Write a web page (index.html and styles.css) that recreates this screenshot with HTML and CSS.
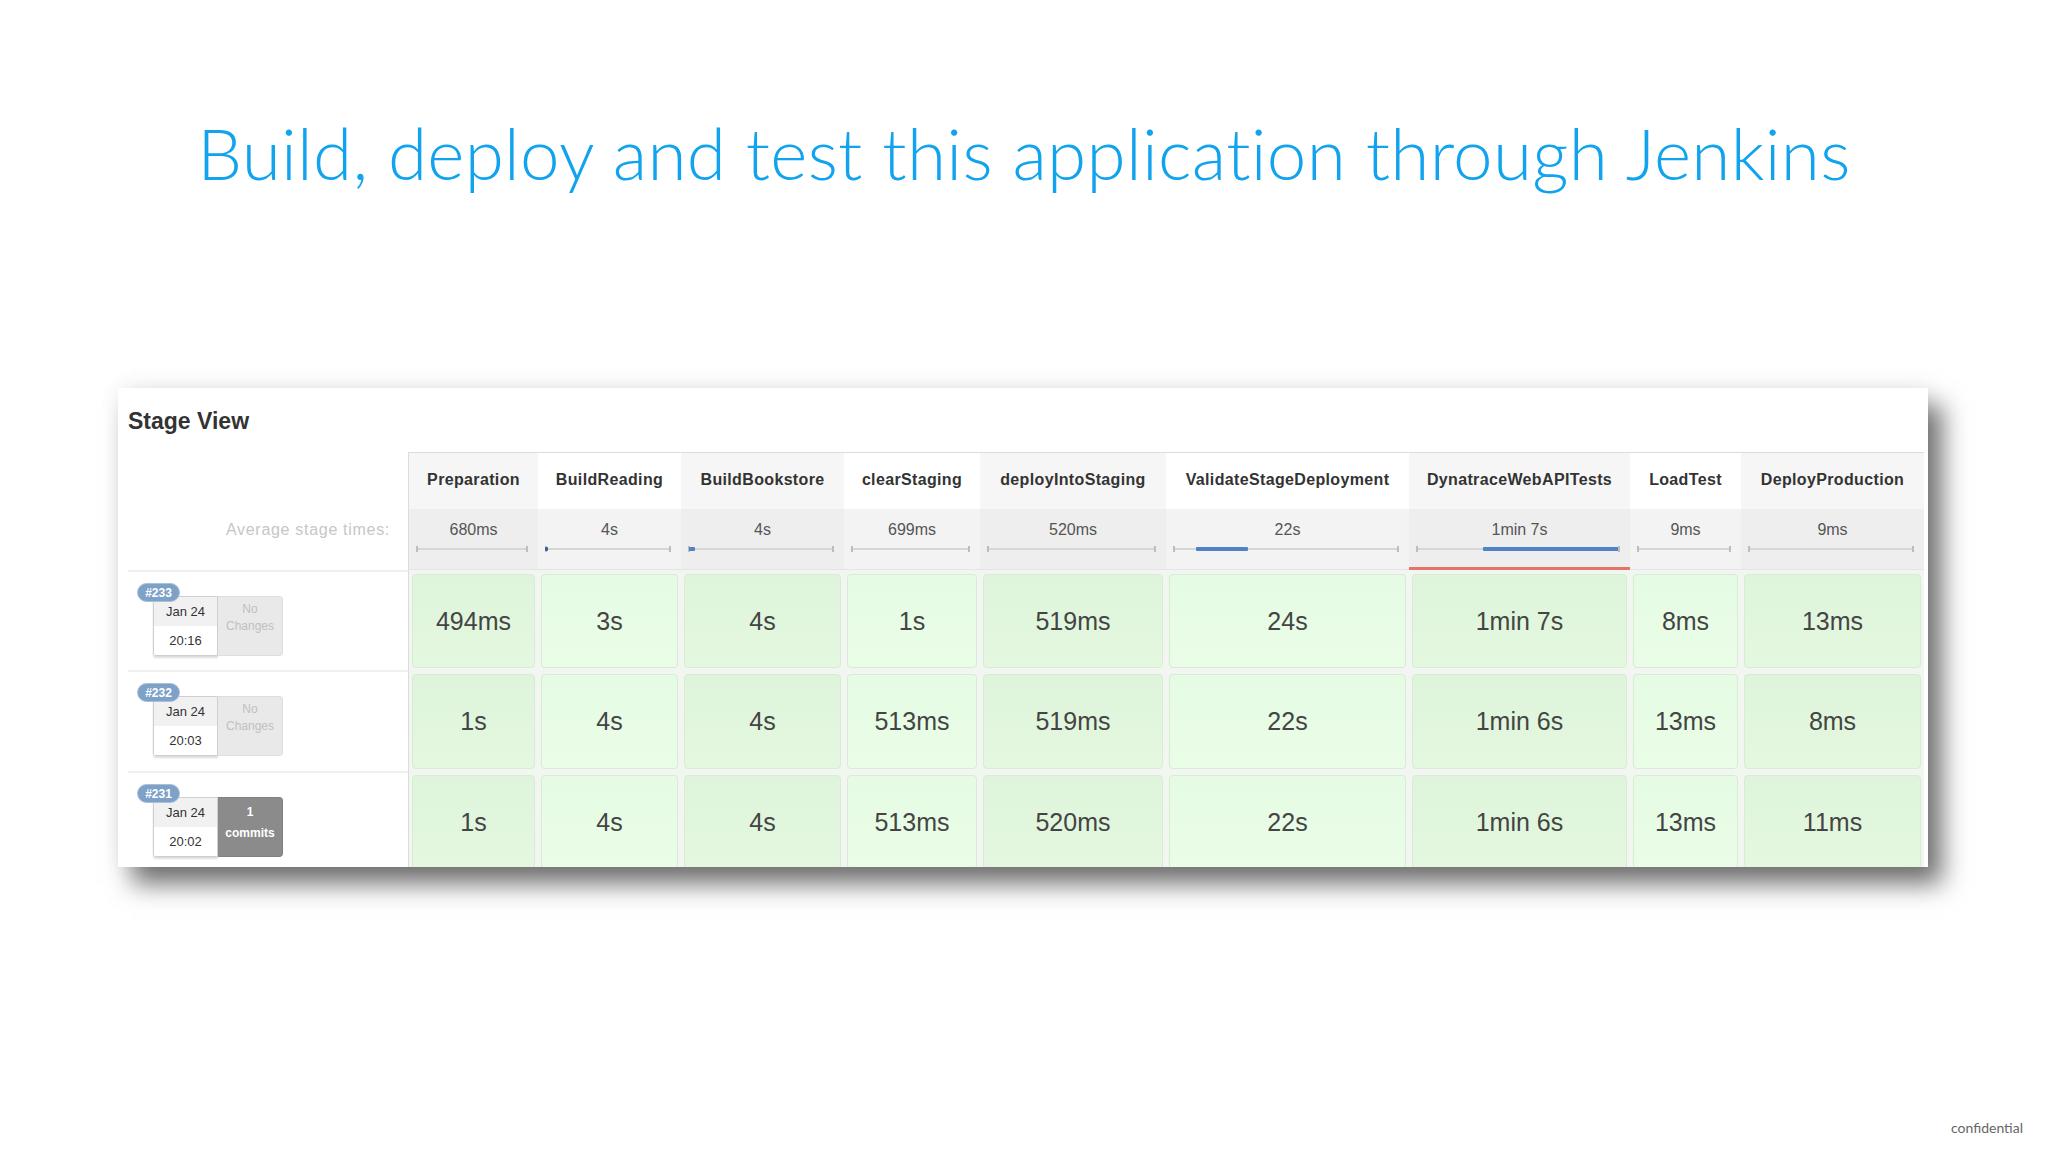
FILE: index.html
```html
<!DOCTYPE html>
<html lang="en">
<head>
<meta charset="utf-8">
<title>Build, deploy and test this application through Jenkins</title>
<link rel="stylesheet" href="styles.css">
</head>
<body>
<div class="slide">
  <h1 class="title">Build, deploy and test this application through Jenkins</h1>

  <div class="panel">
    <h2 class="sv-title">Stage View</h2>
    <div class="sv-grid">
      <!-- header row -->
      <div class="left-head"></div>
      <div class="st-head alt first">Preparation</div>
      <div class="st-head">BuildReading</div>
      <div class="st-head alt">BuildBookstore</div>
      <div class="st-head">clearStaging</div>
      <div class="st-head alt">deployIntoStaging</div>
      <div class="st-head">ValidateStageDeployment</div>
      <div class="st-head alt">DynatraceWebAPITests</div>
      <div class="st-head">LoadTest</div>
      <div class="st-head alt">DeployProduction</div>

      <!-- average row -->
      <div class="avg-label">Average stage times:</div>
      <div class="avg alt first"><span class="avg-time">680ms</span><div class="bar"></div></div>
      <div class="avg"><span class="avg-time">4s</span><div class="bar"><span class="fill dot" style="left:0;width:2%"></span></div></div>
      <div class="avg alt"><span class="avg-time">4s</span><div class="bar"><span class="fill" style="left:1%;width:4%"></span></div></div>
      <div class="avg"><span class="avg-time">699ms</span><div class="bar"></div></div>
      <div class="avg alt"><span class="avg-time">520ms</span><div class="bar"></div></div>
      <div class="avg"><span class="avg-time">22s</span><div class="bar"><span class="fill" style="left:10%;width:23%"></span></div></div>
      <div class="avg alt slow"><span class="avg-time">1min 7s</span><div class="bar"><span class="fill" style="left:33%;width:67%"></span></div></div>
      <div class="avg"><span class="avg-time">9ms</span><div class="bar"></div></div>
      <div class="avg alt"><span class="avg-time">9ms</span><div class="bar"></div></div>

      <!-- build #233 -->
      <div class="build">
        <span class="badge">#233</span>
        <div class="card">
          <div class="date"><span class="day">Jan 24</span><span class="time">20:16</span></div>
          <div class="changes"><span>No</span><span>Changes</span></div>
        </div>
      </div>
      <div class="cell alt first"><div class="box">494ms</div></div>
      <div class="cell"><div class="box">3s</div></div>
      <div class="cell alt"><div class="box">4s</div></div>
      <div class="cell"><div class="box">1s</div></div>
      <div class="cell alt"><div class="box">519ms</div></div>
      <div class="cell"><div class="box">24s</div></div>
      <div class="cell alt"><div class="box">1min 7s</div></div>
      <div class="cell"><div class="box">8ms</div></div>
      <div class="cell alt"><div class="box">13ms</div></div>

      <!-- build #232 -->
      <div class="build">
        <span class="badge">#232</span>
        <div class="card">
          <div class="date"><span class="day">Jan 24</span><span class="time">20:03</span></div>
          <div class="changes"><span>No</span><span>Changes</span></div>
        </div>
      </div>
      <div class="cell alt first"><div class="box">1s</div></div>
      <div class="cell"><div class="box">4s</div></div>
      <div class="cell alt"><div class="box">4s</div></div>
      <div class="cell"><div class="box">513ms</div></div>
      <div class="cell alt"><div class="box">519ms</div></div>
      <div class="cell"><div class="box">22s</div></div>
      <div class="cell alt"><div class="box">1min 6s</div></div>
      <div class="cell"><div class="box">13ms</div></div>
      <div class="cell alt"><div class="box">8ms</div></div>

      <!-- build #231 -->
      <div class="build">
        <span class="badge">#231</span>
        <div class="card">
          <div class="date"><span class="day">Jan 24</span><span class="time">20:02</span></div>
          <div class="changes commits"><span class="num">1</span><span>commits</span></div>
        </div>
      </div>
      <div class="cell alt first"><div class="box">1s</div></div>
      <div class="cell"><div class="box">4s</div></div>
      <div class="cell alt"><div class="box">4s</div></div>
      <div class="cell"><div class="box">513ms</div></div>
      <div class="cell alt"><div class="box">520ms</div></div>
      <div class="cell"><div class="box">22s</div></div>
      <div class="cell alt"><div class="box">1min 6s</div></div>
      <div class="cell"><div class="box">13ms</div></div>
      <div class="cell alt"><div class="box">11ms</div></div>
    </div>
  </div>

  <div class="confidential">confidential</div>
</div>
</body>
</html>
```

FILE: styles.css
```css
html, body {
  margin: 0;
  padding: 0;
  background: #ffffff;
}

.slide {
  width: 2048px;
  height: 1152px;
  box-sizing: border-box;
  display: flex;
  flex-direction: column;
  overflow: hidden;
  background: #ffffff;
  padding: 0 25px 15px 0;
}

.title {
  margin: 112px 0 0 0;
  padding-left: 25px;
  font-family: "Lato", "Liberation Sans", sans-serif;
  font-weight: 300;
  font-size: 71px;
  line-height: 82px;
  letter-spacing: 0.3px;
  color: #11a3ee;
  text-align: center;
  white-space: nowrap;
}

.panel {
  margin: 194px 0 0 118px;
  width: 1810px;
  height: 479px;
  box-sizing: border-box;
  padding: 19px 4px 0 10px;
  background: #ffffff;
  overflow: hidden;
  font-family: "Liberation Sans", Arial, sans-serif;
  box-shadow: 14px 17px 24px rgba(0, 0, 0, 0.56), 0 -4px 22px rgba(0, 0, 0, 0.05);
}

.sv-title {
  margin: 0 0 17px 0;
  font-size: 23px;
  line-height: 28px;
  font-weight: bold;
  color: #333333;
}

.sv-grid {
  display: grid;
  grid-template-columns: 280px 130px 143px 163px 136px 186px 243px 221px 111px 183px;
  grid-template-rows: 57px 61px 100px 101px 100px;
}

/* header row */
.left-head {
  background: #ffffff;
}

.st-head {
  display: flex;
  align-items: center;
  justify-content: center;
  border-top: 1px solid #dcdcdc;
  background: #ffffff;
  font-size: 16px;
  font-weight: bold;
  letter-spacing: 0.35px;
  color: #333333;
  white-space: nowrap;
  padding-bottom: 2px;
}

.st-head.alt {
  background: #f6f6f6;
}

.st-head.first,
.avg.first,
.cell.first {
  border-left: 1px solid #dcdcdc;
}

/* average row */
.avg-label {
  text-align: right;
  padding: 11px 18px 0 0;
  font-size: 16px;
  line-height: 20px;
  color: #c6c6c6;
  letter-spacing: 0.7px;
  white-space: nowrap;
}

.avg {
  display: flex;
  flex-direction: column;
  align-items: stretch;
  background: #f3f3f3;
  box-sizing: border-box;
  padding-top: 11px;
  border-bottom: 1px solid #e4e4e4;
}

.avg.alt {
  background: #eeeeee;
}

.avg.slow {
  border-bottom: 3px solid #e27468;
}

.avg-time {
  text-align: center;
  font-size: 16px;
  line-height: 20px;
  color: #555555;
}

.bar {
  position: relative;
  height: 2px;
  margin: 8px 10px 0 7px;
  background: #d6d6d6;
}

.bar::before,
.bar::after {
  content: "";
  position: absolute;
  top: -2px;
  width: 2px;
  height: 6px;
  background: #bdbdbd;
}

.bar::before {
  left: 0;
}

.bar::after {
  right: 0;
}

.fill {
  position: absolute;
  top: -1px;
  height: 4px;
  background: #4f82c6;
  border-radius: 1px;
}

.fill.dot {
  background: #3d5f96;
  height: 4px;
}

/* build column */
.build {
  position: relative;
  border-top: 2px solid #f0f0f0;
  box-sizing: border-box;
  padding: 24px 0 0 25px;
}

.badge {
  position: absolute;
  left: 9px;
  top: 11px;
  z-index: 2;
  width: 43px;
  height: 19px;
  line-height: 19px;
  border-radius: 10px;
  background: #7ea1c8;
  border: 1px solid #a9c0da;
  box-sizing: border-box;
  color: #ffffff;
  font-size: 12px;
  font-weight: bold;
  text-align: center;
}

.card {
  display: flex;
  width: 130px;
  height: 60px;
}

.date {
  width: 65px;
  display: flex;
  flex-direction: column;
  border: 1px solid #cfcfcf;
  border-radius: 3px 0 0 3px;
  box-sizing: border-box;
  box-shadow: 0 2px 2px rgba(0, 0, 0, 0.14);
  overflow: hidden;
}

.day,
.time {
  flex: 1;
  display: flex;
  align-items: center;
  justify-content: center;
  font-size: 13px;
  color: #333333;
}

.day {
  background: #f1f1f1;
}

.time {
  background: #ffffff;
}

.changes {
  width: 65px;
  display: flex;
  flex-direction: column;
  align-items: center;
  box-sizing: border-box;
  padding-top: 4px;
  background: #e9e9e9;
  border: 1px solid #dedede;
  border-left: none;
  border-radius: 0 4px 4px 0;
  font-size: 12px;
  line-height: 17px;
  color: #c0c0c0;
}

.changes.commits {
  background: #8b8b8b;
  border-color: #808080;
  color: #ffffff;
  font-weight: bold;
  padding-top: 4px;
  line-height: 21px;
}

/* stage cells */
.cell {
  padding: 4px 3px 2px 3px;
  background: #f1f6f0;
  box-sizing: border-box;
}

.box {
  height: 100%;
  display: flex;
  align-items: center;
  justify-content: center;
  box-sizing: border-box;
  border: 1px solid #d9ebd6;
  border-radius: 4px;
  background: linear-gradient(180deg, #e6fbe4 0%, #e9fde7 100%);
  font-size: 25px;
  color: #444444;
}

.cell.alt .box {
  background: linear-gradient(180deg, #dff5db 0%, #e3f8df 100%);
}

.confidential {
  margin-top: auto;
  align-self: flex-end;
  font-family: "Lato", "Liberation Sans", sans-serif;
  font-size: 14px;
  line-height: 18px;
  color: #666666;
}
```
